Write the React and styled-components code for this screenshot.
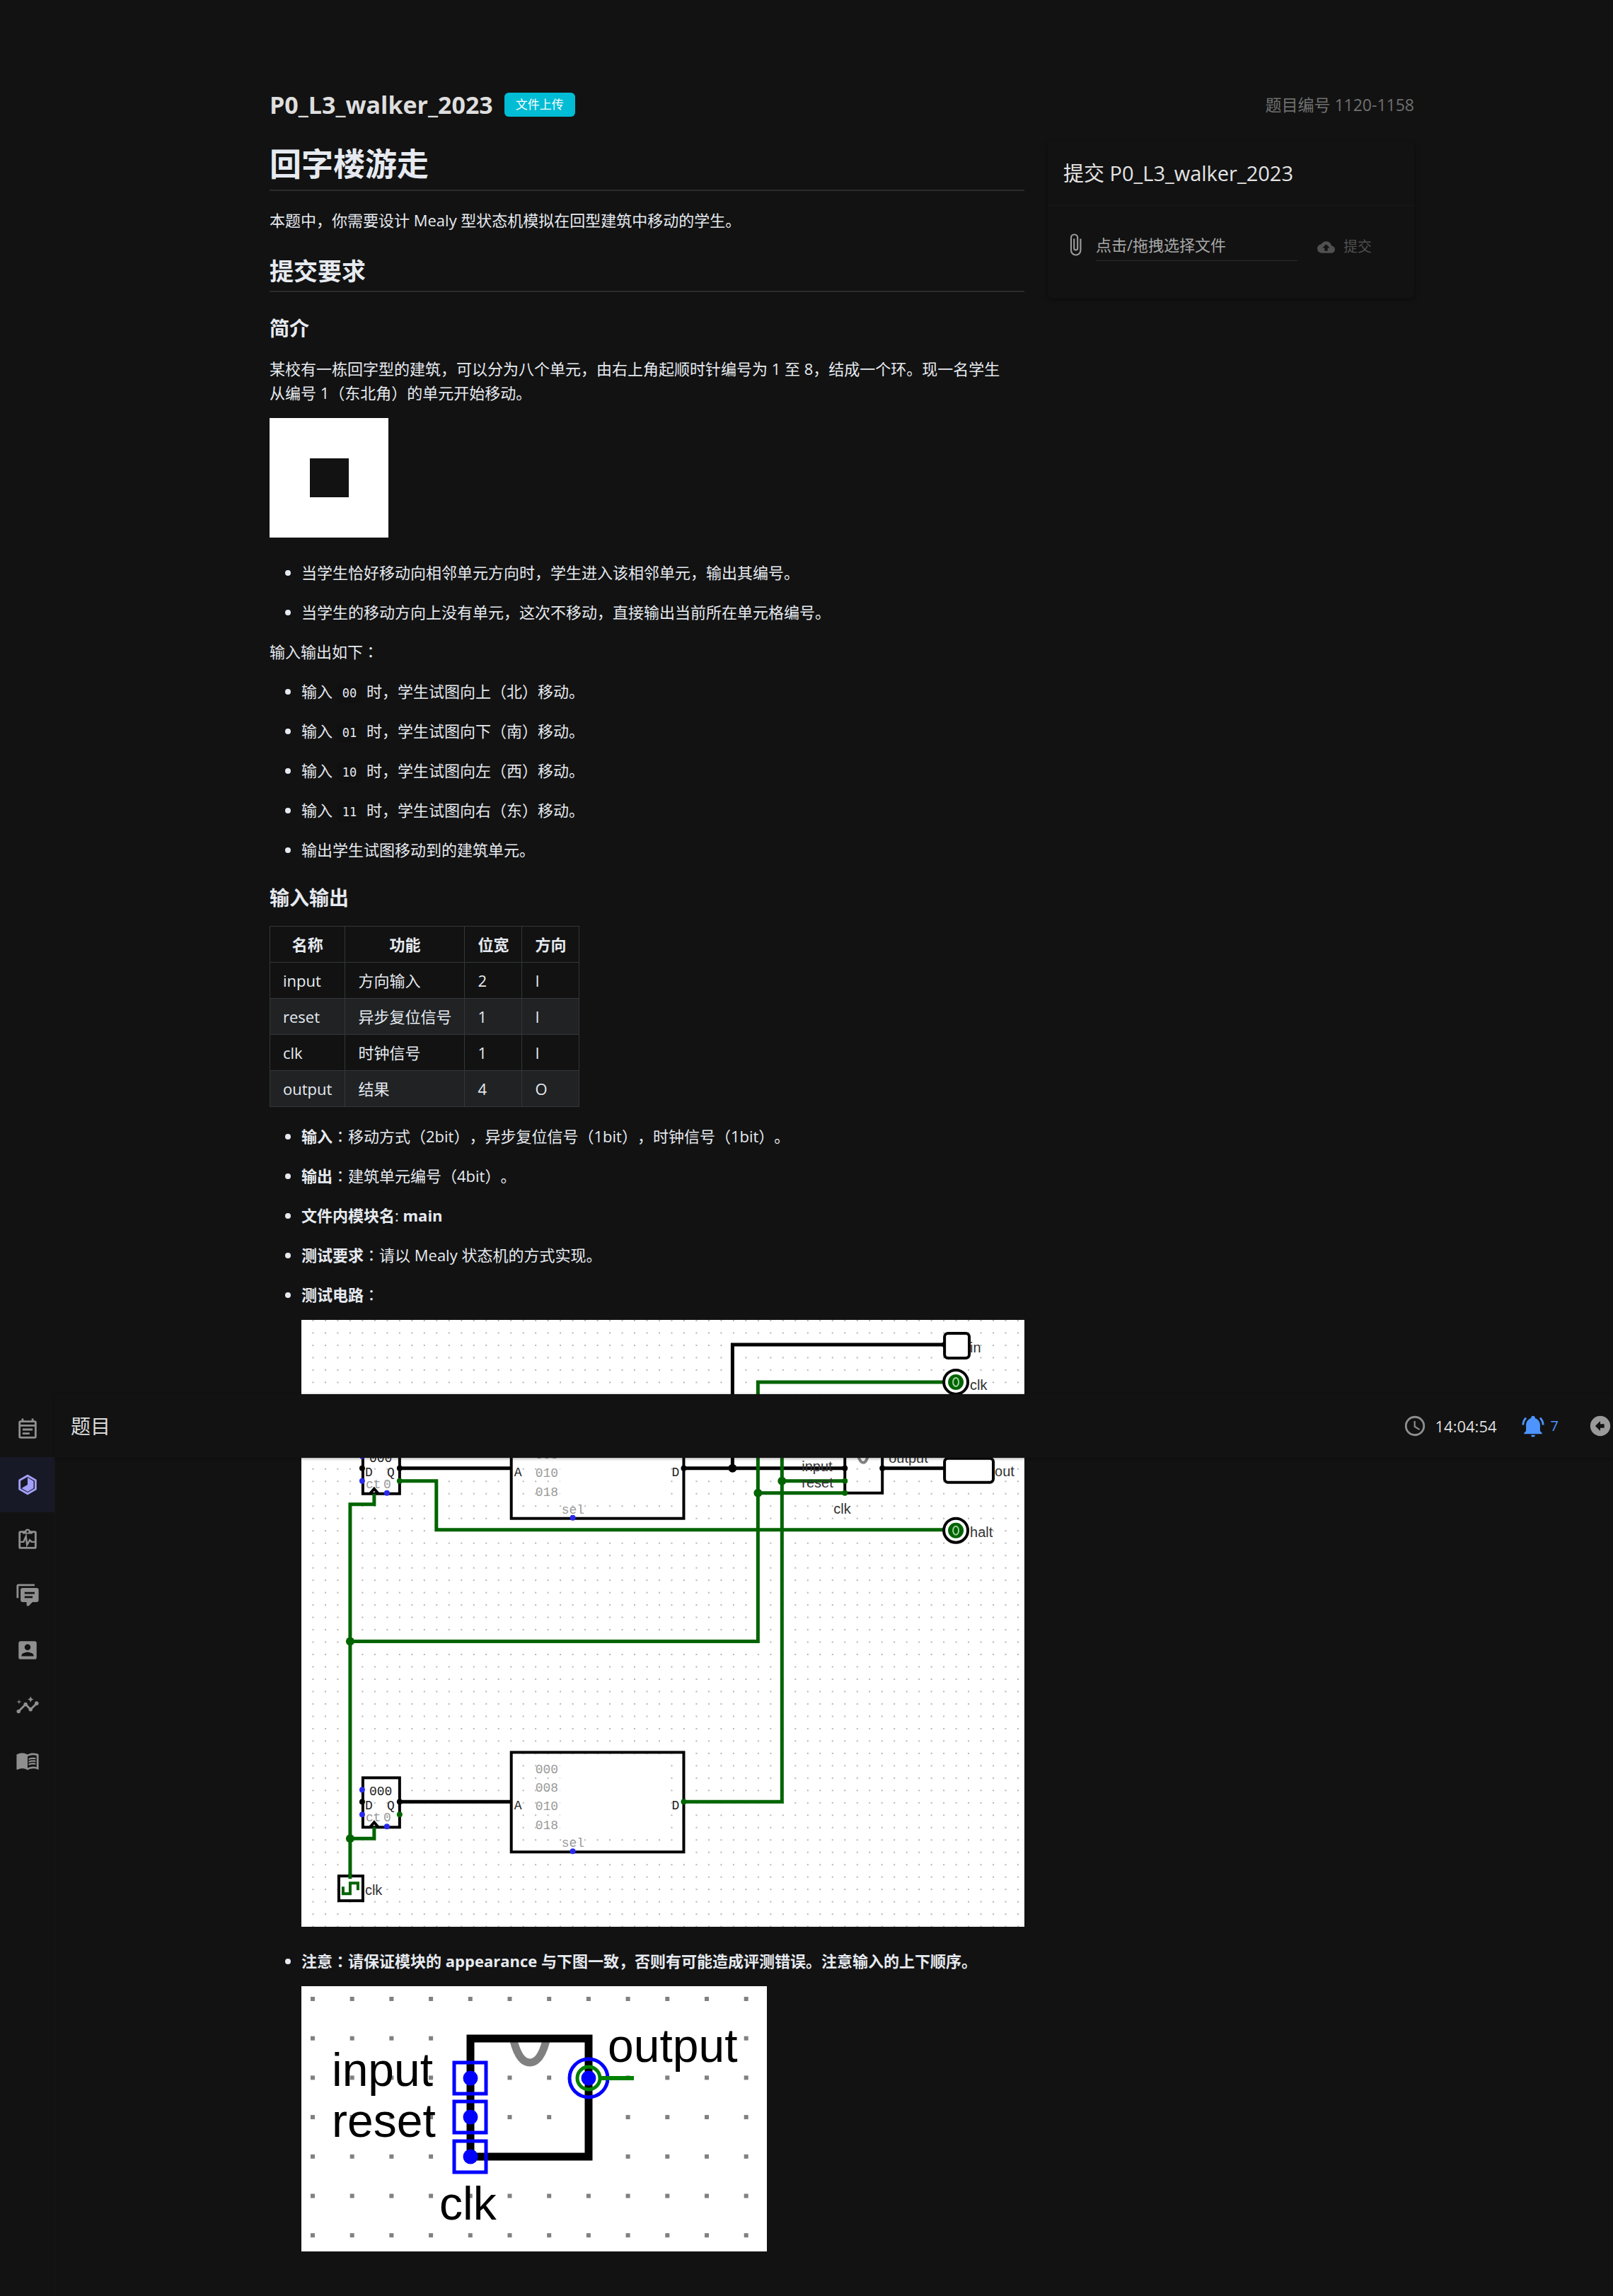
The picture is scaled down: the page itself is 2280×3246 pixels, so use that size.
import React from 'react';
import styled, { createGlobalStyle, css } from 'styled-components';
import { MdInsights, MdMenuBook } from 'react-icons/md';

const GlobalStyle = createGlobalStyle`
  * { box-sizing: border-box; }
  body {
    margin: 0;
    background: #121212;
    color: #e6eaf0;
    font-family: "Open Sans", "Noto Sans CJK SC", sans-serif;
    font-size: 22px;
    line-height: 34px;
    text-spacing-trim: space-all;
  }
`;

const Page = styled.div`
  position: relative;
`;

const Content = styled.main`
  max-width: 1640px;
  margin: 0 auto;
  margin-left: max(78px, calc((100% - 1562px) / 2));
  padding: 120px 0 62px 22px;
`;

const TitleRow = styled.header`
  display: flex;
  align-items: center;
  min-height: 56px;
  margin-bottom: 24px;
`;

const PageTitle = styled.h1`
  margin: 0;
  color: #dedede;
  font-size: 34px;
  line-height: 56px;
  font-weight: 700;
`;

const Badge = styled.span`
  margin-left: 16px;
  padding: 0 16px;
  border-radius: 6px;
  background: #00bcd4;
  color: #fff;
  font-size: 17px;
  line-height: 34px;
`;

const ProblemId = styled.span`
  margin-left: auto;
  color: #707070;
  font-size: 23px;
`;

const Columns = styled.div`
  display: grid;
  grid-template-columns: minmax(0, 1067fr) minmax(0, 518fr);
  column-gap: 33px;
  align-items: start;
`;

const Article = styled.article`
  display: flex;
  flex-direction: column;
  align-items: stretch;
`;

const H1 = styled.h2`
  margin: 0 0 24px;
  padding-bottom: 4px;
  border-bottom: 2px solid #2c2c2c;
  font-size: 45px;
  line-height: 64px;
`;

const H2 = styled.h3`
  margin: 34px 0 0;
  padding-bottom: 7px;
  border-bottom: 2px solid #2c2c2c;
  font-size: 34px;
  line-height: 42px;
`;

const H3 = styled.h4`
  margin: 33px 0 22px;
  font-size: 28px;
  line-height: 36px;
`;

const Paragraph = styled.p`
  margin: ${(p) => (p.$spaced ? '22px 0' : '0')};
`;

const List = styled.ul`
  display: flex;
  flex-direction: column;
  gap: 22px;
  margin: 0;
  padding-left: 45px;
`;

const Code = styled.code`
  padding: 4px 8px;
  border-radius: 6px;
  background: #101010;
  font-family: "DejaVu Sans Mono", monospace;
  font-size: 17px;
  line-height: 1;
`;

const Colon = styled.span.attrs({ children: '：' })`
  font-family: "Noto Sans CJK JP", sans-serif;
  line-height: 1;
`;

const Figure = styled.figure`
  margin: 19px 0 32px;
  ${(p) => p.$inList && css`margin-bottom: ${p.$last ? '0' : '9px'};`}
  svg {
    display: block;
    width: 100%;
    max-width: ${(p) => p.$max || 'none'};
    height: auto;
  }
`;

const Table = styled.table`
  align-self: flex-start;
  margin-bottom: 24px;
  border-collapse: collapse;
  th, td {
    padding: 8px 18px;
    border: 1px solid #343638;
    text-align: left;
  }
  th { text-align: center; }
  tbody tr:nth-child(even) { background: #202224; }
`;

const Card = styled.section`
  border-radius: 6px;
  background: #121212;
  box-shadow: 0 2px 6px rgba(0, 0, 0, 0.4);
`;

const CardTitle = styled.h2`
  margin: 0;
  padding: 28px 22px;
  border-bottom: 1px solid #191919;
  color: #e4e4e4;
  font-size: 29px;
  line-height: 34px;
  font-weight: 400;
`;

const UploadRow = styled.form`
  display: flex;
  align-items: stretch;
  gap: 12px;
  padding: 38px 22px 53px;
  color: #9c9c9c;
`;

const FileLabel = styled.label`
  flex: 0 1 285px;
  padding-bottom: 5px;
  border-bottom: 1px solid #2b2b2b;
  cursor: pointer;
  color: #a8a8a8;
`;

const HiddenFile = styled.input`
  position: absolute;
  width: 1px;
  height: 1px;
  opacity: 0;
`;

const SubmitButton = styled.button`
  display: flex;
  align-items: center;
  gap: 12px;
  padding: 0 16px;
  border: 0;
  background: none;
  color: #505050;
  font: inherit;
  font-size: 20px;
`;

const Shell = styled.div`
  position: absolute;
  top: 1971px;
  right: 0;
  bottom: 0;
  left: 0;
  display: flex;
  align-items: flex-start;
  pointer-events: none;
`;

const Rail = styled.nav`
  align-self: stretch;
  flex: none;
  width: 78px;
  padding-top: 11px;
  border-right: 1px solid #161616;
  background: #121212;
  pointer-events: auto;
`;

const RailLink = styled.a`
  display: flex;
  align-items: center;
  justify-content: center;
  height: 78px;
  color: ${(p) => (p.$active ? '#a3a0fb' : '#8f8f8f')};
  background: ${(p) => (p.$active ? '#181926' : 'transparent')};
`;

const TopBar = styled.div`
  flex: 1;
  display: flex;
  align-items: center;
  height: 90px;
  padding: 0 1px 0 22px;
  background: #121212;
  box-shadow: 0 1px 4px rgba(0, 0, 0, 0.4);
  color: #dedede;
  pointer-events: auto;
`;

const BarTitle = styled.span`
  flex: 1;
  font-size: 28px;
`;

const Clock = styled.span`
  display: flex;
  align-items: center;
  gap: 12px;
  svg { color: #8f8f8f; }
`;

const BarButton = styled.button`
  display: flex;
  align-items: center;
  gap: 8px;
  margin-left: ${(p) => (p.$wide ? '42px' : '34px')};
  padding: 0;
  border: 0;
  background: none;
  color: ${(p) => (p.$accent ? '#4d94ff' : '#9a9a9a')};
  font: inherit;
  font-size: 20px;
`;

const Icon = ({ d, size = 34 }) => (
  <svg width={size} height={size} viewBox="0 0 24 24" fill="currentColor" aria-hidden="true">
    <path fillRule="evenodd" d={d} />
  </svg>
);

const paths = {
  calendar: 'M7 11H17V13H7V11M7 15H14V17H7V15M19 3H18V1H16V3H8V1H6V3H5C3.89 3 3 3.9 3 5V19A2 2 0 0 0 5 21H19A2 2 0 0 0 21 19V5A2 2 0 0 0 19 3M19 19H5V9H19V19M19 7H5V5H19V7Z',
  hexagon: 'M21,16.5C21,16.88 20.79,17.21 20.47,17.38L12.57,21.82C12.41,21.94 12.21,22 12,22C11.79,22 11.59,21.94 11.43,21.82L3.53,17.38C3.21,17.21 3,16.88 3,16.5V7.5C3,7.12 3.21,6.79 3.53,6.62L11.43,2.18C11.59,2.06 11.79,2 12,2C12.21,2 12.41,2.06 12.57,2.18L20.47,6.62C20.79,6.79 21,7.12 21,7.5V16.5M12,4.15L5,8.09V15.91L12,19.85L19,15.91V8.09L12,4.15M12,5L18,8.5V15.5L12,19L6,15.5L12,12V5Z',
  comments: 'M12,23A1,1 0 0,1 11,22V19H7A2,2 0 0,1 5,17V7A2,2 0 0,1 7,5H21A2,2 0 0,1 23,7V17A2,2 0 0,1 21,19H16.9L13.2,22.71C13,22.89 12.76,23 12.5,23H12M3,15H1V3A2,2 0 0,1 3,1H19V3H3V15M9,9V11H19V9H9M9,13V15H17V13H9Z',
  account: 'M6,17C6,15 10,13.9 12,13.9C14,13.9 18,15 18,17V18H6M15,9A3,3 0 0,1 12,12A3,3 0 0,1 9,9A3,3 0 0,1 12,6A3,3 0 0,1 15,9M3,5V19A2,2 0 0,0 5,21H19A2,2 0 0,0 21,19V5A2,2 0 0,0 19,3H5C3.89,3 3,3.9 3,5Z',
  clip: 'M16.5,6V17.5A4,4 0 0,1 12.5,21.5A4,4 0 0,1 8.5,17.5V5A2.5,2.5 0 0,1 11,2.5A2.5,2.5 0 0,1 13.5,5V15.5A1,1 0 0,1 12.5,16.5A1,1 0 0,1 11.5,15.5V6H10V15.5A2.5,2.5 0 0,0 12.5,18A2.5,2.5 0 0,0 15,15.5V5A4,4 0 0,0 11,1A4,4 0 0,0 7,5V17.5A5.5,5.5 0 0,0 12.5,23A5.5,5.5 0 0,0 18,17.5V6H16.5Z',
  upload: 'M14,13V17H10V13H7L12,8L17,13M19.35,10.03C18.67,6.59 15.64,4 12,4C9.11,4 6.6,5.64 5.35,8.03C2.34,8.36 0,10.9 0,14A6,6 0 0,0 6,20H19A5,5 0 0,0 24,15C24,12.36 21.95,10.22 19.35,10.03Z',
  clock: 'M12,20A8,8 0 0,0 20,12A8,8 0 0,0 12,4A8,8 0 0,0 4,12A8,8 0 0,0 12,20M12,2A10,10 0 0,1 22,12A10,10 0 0,1 12,22C6.47,22 2,17.5 2,12A10,10 0 0,1 12,2M12.5,7V12.25L17,14.92L16.25,16.15L11,13V7H12.5Z',
  bell: 'M21,19V20H3V19L5,17V11C5,7.9 7.03,5.17 10,4.29C10,4.19 10,4.1 10,4A2,2 0 0,1 12,2A2,2 0 0,1 14,4C14,4.1 14,4.19 14,4.29C16.97,5.17 19,7.9 19,11V17L21,19M14,21A2,2 0 0,1 12,23A2,2 0 0,1 10,21M19.75,3.19L18.33,4.61C20.04,6.3 21,8.6 21,11H23C23,8.07 21.84,5.25 19.75,3.19M1,11H3C3,8.6 3.96,6.3 5.67,4.61L4.25,3.19C2.16,5.25 1,8.07 1,11Z',
  back: 'M22,12A10,10 0 0,1 12,22A10,10 0 0,1 2,12A10,10 0 0,1 12,2A10,10 0 0,1 22,12M7,12L12,17V14H16V10H12V7L7,12Z',
};

const PulseIcon = () => (
  <svg width="34" height="34" viewBox="0 0 24 24" fill="currentColor" aria-hidden="true">
    <path fillRule="evenodd" d="M19,3H14.82C14.4,1.84 13.3,1 12,1C10.7,1 9.6,1.84 9.18,3H5A2,2 0 0,0 3,5V19A2,2 0 0,0 5,21H19A2,2 0 0,0 21,19V5A2,2 0 0,0 19,3M12,2.7A1.1,1.1 0 0,1 12,4.9A1.1,1.1 0 0,1 12,2.7M5,5H7V6H17V5H19V19H5Z" />
    <path d="M5 14H8L10.4 8.5L11.4 17L14.2 12.2L16 14H19" fill="none" stroke="currentColor" strokeWidth="1.7" />
  </svg>
);

const BuildingFigure = () => (
  <svg viewBox="0 0 168 169" role="img" aria-label="回字楼">
    <path fillRule="evenodd" fill="#fff" d="M0 0H168V169H0ZM57 57V112H112V57Z" />
  </svg>
);

const GREEN = '#006400';
const BLUE = '#2a2aee';

const Wires = styled.g`
  fill: none;
  stroke-width: 5;
`;

const Sans = styled.text`
  font-family: "Liberation Sans", sans-serif;
  font-size: ${(p) => p.$size || 20}px;
  fill: ${(p) => (p.$size ? '#000' : '#333')};
`;

const Mono = styled.text`
  font-family: "Liberation Mono", monospace;
  font-size: 18px;
  fill: ${(p) => (p.$dim ? '#9a9a9a' : '#222')};
`;

const RegisterAndRom = ({ y }) => (
  <g transform={`translate(0 ${y})`}>
    <rect x="87" y="36" width="52" height="70" fill="none" stroke="#000" strokeWidth="4" />
    <rect x="297" y="0" width="244" height="141" fill="none" stroke="#000" strokeWidth="4" />
    <rect x="366" y="4" width="150" height="112" fill="#fff" />
    <path d="M139 70H297" stroke="#000" strokeWidth="5" />
    <Mono x="96" y="61">000</Mono>
    <Mono x="90" y="81">D</Mono>
    <Mono x="121" y="81">Q</Mono>
    <Mono x="91" y="98" $dim>ct</Mono>
    <Mono x="116" y="98" $dim>0</Mono>
    <path d="M97 106L103 99L109 106" fill="none" stroke="#000" strokeWidth="4" />
    <Mono x="301" y="81">A</Mono>
    <Mono x="524" y="81">D</Mono>
    <Mono x="331" y="30" $dim>000</Mono>
    <Mono x="331" y="56" $dim>008</Mono>
    <Mono x="331" y="82" $dim>010</Mono>
    <Mono x="331" y="109" $dim>018</Mono>
    <Mono x="368" y="134" $dim>sel</Mono>
    <circle cx="86" cy="53" r="4" fill={BLUE} />
    <circle cx="86" cy="70" r="4" />
    <circle cx="86" cy="88" r="4" fill={BLUE} />
    <circle cx="121" cy="105" r="4" fill={BLUE} />
    <circle cx="384" cy="140" r="4" fill={BLUE} />
    <circle cx="139" cy="70" r="4" />
    <circle cx="139" cy="88" r="4" fill={GREEN} />
  </g>
);

const Probe = ({ cy }) => (
  <g>
    <circle cx="926" cy={cy} r="17" fill="#fff" stroke="#000" strokeWidth="4" />
    <circle cx="926" cy={cy} r="11" fill={GREEN} />
    <ellipse cx="926" cy={cy} rx="4" ry="6" fill="none" stroke="#9fd09f" strokeWidth="2" />
  </g>
);

const CircuitFigure = () => (
  <svg viewBox="0 0 1023 859" role="img" aria-label="测试电路">
    <defs>
      <pattern id="grid" width="17.5" height="17.5" patternUnits="userSpaceOnUse" x="15.5" y="0">
        <rect width="2" height="2" fill="#b4b4b4" />
      </pattern>
    </defs>
    <rect width="1023" height="859" fill="#fff" />
    <rect width="1023" height="859" fill="url(#grid)" />
    <RegisterAndRom y={140} />
    <RegisterAndRom y={612} />
    <rect x="769" y="175" width="53" height="70" fill="none" stroke="#000" strokeWidth="4" />
    <path d="M785 177C787 196 791 202 795 202S802 196 804 177" fill="none" stroke="#808080" strokeWidth="4" />
    <Wires stroke="#000">
      <path d="M910 35H610V210" />
      <path d="M541 210H769M822 210H910" />
    </Wires>
    <Wires stroke={GREEN}>
      <path d="M910 88H646V455H69" />
      <path d="M680 130V682H541" />
      <path d="M680 228H769M646 245H769" />
      <path d="M139 228H191V297H910" />
      <path d="M103 246V261H69V788M69 734H103V718" />
    </Wires>
    <circle cx="610" cy="210" r="6" />
    <circle cx="910" cy="35" r="4" />
    <circle cx="769" cy="210" r="4" />
    <circle cx="822" cy="210" r="4" />
    <circle cx="541" cy="210" r="4" />
    <g fill={GREEN}>
      <circle cx="680" cy="228" r="6" />
      <circle cx="646" cy="245" r="6" />
      <circle cx="69" cy="455" r="6" />
      <circle cx="69" cy="734" r="6" />
      <circle cx="769" cy="228" r="4" />
      <circle cx="769" cy="245" r="4" />
      <circle cx="541" cy="682" r="4" />
    </g>
    <g fill="#fff" stroke="#000" strokeWidth="4">
      <rect x="910" y="19" width="35" height="35" rx="5" />
      <rect x="910" y="196" width="69" height="34" rx="5" />
      <rect x="53" y="787" width="34" height="35" />
    </g>
    <path d="M69 784V791" stroke={GREEN} strokeWidth="5" />
    <path d="M59 802V812H69V797H80V807" fill="none" stroke={GREEN} strokeWidth="4" />
    <Probe cy={88} />
    <Probe cy={298} />
    <Sans x="946" y="46">in</Sans>
    <Sans x="946" y="99">clk</Sans>
    <Sans x="708" y="214">input</Sans>
    <Sans x="708" y="237">reset</Sans>
    <Sans x="753" y="274">clk</Sans>
    <Sans x="831" y="202">output</Sans>
    <Sans x="981" y="221">out</Sans>
    <Sans x="946" y="307">halt</Sans>
    <Sans x="90" y="814">clk</Sans>
  </svg>
);

const gridDots = [];
for (let row = 0; row < 7; row += 1) {
  for (let col = 0; col < 12; col += 1) {
    const underLabel = row === 1 && col > 7 && col < 11;
    if (!underLabel) gridDots.push([16 + col * 55.7, 18 + row * 55.7]);
  }
}

const AppearanceFigure = () => (
  <svg viewBox="0 0 658 375" role="img" aria-label="模块外观">
    <rect width="658" height="375" fill="#fff" />
    {gridDots.map(([x, y]) => (
      <rect key={`${x}-${y}`} x={x - 3} y={y - 3} width="6" height="6" fill="#808080" />
    ))}
    <path d="M300 77C306 100 314 108 323 108S340 100 346 77" fill="none" stroke="#808080" strokeWidth="11" />
    <rect x="239" y="74" width="167" height="167" fill="none" stroke="#000" strokeWidth="11" />
    {[130, 185, 241].map((cy) => (
      <g key={cy}>
        <rect x="216" y={cy - 22} width="45" height="44" fill="none" stroke="#00f" strokeWidth="5" />
        <circle cx="239" cy={cy} r="10.5" fill="#00f" />
      </g>
    ))}
    <circle cx="406" cy="130" r="27" fill="none" stroke="#00f" strokeWidth="5" />
    <circle cx="406" cy="130" r="16" fill="none" stroke="#008000" strokeWidth="5" />
    <circle cx="406" cy="130" r="10.5" fill="#00f" />
    <path d="M423 130H470" stroke="#008000" strokeWidth="6" />
    <Sans x="43" y="141" $size={66}>input</Sans>
    <Sans x="43" y="213" $size={66}>reset</Sans>
    <Sans x="433" y="107" $size={66}>output</Sans>
    <Sans x="195" y="330" $size={66}>clk</Sans>
  </svg>
);

const moves = [
  ['00', '上（北）'],
  ['01', '下（南）'],
  ['10', '左（西）'],
  ['11', '右（东）'],
];

const ports = [
  ['input', '方向输入', '2', 'I'],
  ['reset', '异步复位信号', '1', 'I'],
  ['clk', '时钟信号', '1', 'I'],
  ['output', '结果', '4', 'O'],
];

const navItems = [
  { label: '日程', icon: <Icon d={paths.calendar} /> },
  { label: '题目', icon: <Icon d={paths.hexagon} />, active: true },
  { label: '评测', icon: <PulseIcon /> },
  { label: '讨论', icon: <Icon d={paths.comments} /> },
  { label: '个人', icon: <Icon d={paths.account} /> },
  { label: '统计', icon: <MdInsights size={34} /> },
  { label: '教程', icon: <MdMenuBook size={34} /> },
];

export default function App() {
  return (
    <Page>
      <GlobalStyle />
      <Content>
        <TitleRow>
          <PageTitle>P0_L3_walker_2023</PageTitle>
          <Badge>文件上传</Badge>
          <ProblemId>题目编号 1120-1158</ProblemId>
        </TitleRow>
        <Columns>
          <Article>
            <H1>回字楼游走</H1>
            <Paragraph>本题中，你需要设计 Mealy 型状态机模拟在回型建筑中移动的学生。</Paragraph>
            <H2>提交要求</H2>
            <H3>简介</H3>
            <Paragraph>
              某校有一栋回字型的建筑，可以分为八个单元，由右上角起顺时针编号为 1 至 8，结成一个环。现一名学生
              <br />
              从编号 1（东北角）的单元开始移动。
            </Paragraph>
            <Figure $max="168px"><BuildingFigure /></Figure>
            <List>
              <li>当学生恰好移动向相邻单元方向时，学生进入该相邻单元，输出其编号。</li>
              <li>当学生的移动方向上没有单元，这次不移动，直接输出当前所在单元格编号。</li>
            </List>
            <Paragraph $spaced>输入输出如下<Colon /></Paragraph>
            <List>
              {moves.map(([code, dir]) => (
                <li key={code}>输入 <Code>{code}</Code> 时，学生试图向{dir}移动。</li>
              ))}
              <li>输出学生试图移动到的建筑单元。</li>
            </List>
            <H3>输入输出</H3>
            <Table>
              <thead>
                <tr><th>名称</th><th>功能</th><th>位宽</th><th>方向</th></tr>
              </thead>
              <tbody>
                {ports.map((row) => (
                  <tr key={row[0]}>{row.map((cell, i) => <td key={i}>{cell}</td>)}</tr>
                ))}
              </tbody>
            </Table>
            <List>
              <li><strong>输入</strong><Colon />移动方式（2bit），异步复位信号（1bit），时钟信号（1bit）。</li>
              <li><strong>输出</strong><Colon />建筑单元编号（4bit）。</li>
              <li><strong>文件内模块名</strong>: <strong>main</strong></li>
              <li><strong>测试要求</strong><Colon />请以 Mealy 状态机的方式实现。</li>
              <li>
                <strong>测试电路</strong><Colon />
                <Figure $inList><CircuitFigure /></Figure>
              </li>
              <li>
                <strong>注意<Colon />请保证模块的 appearance 与下图一致，否则有可能造成评测错误。注意输入的上下顺序。</strong>
                <Figure $inList $last $max="658px"><AppearanceFigure /></Figure>
              </li>
            </List>
          </Article>
          <Card>
            <CardTitle>提交 P0_L3_walker_2023</CardTitle>
            <UploadRow>
              <Icon d={paths.clip} />
              <FileLabel htmlFor="upload">点击/拖拽选择文件</FileLabel>
              <HiddenFile id="upload" type="file" />
              <SubmitButton type="submit" disabled>
                <Icon d={paths.upload} size={25} />
                提交
              </SubmitButton>
            </UploadRow>
          </Card>
        </Columns>
      </Content>
      <Shell>
        <Rail>
          {navItems.map(({ label, icon, active }) => (
            <RailLink key={label} href="#" aria-label={label} $active={active}>{icon}</RailLink>
          ))}
        </Rail>
        <TopBar>
          <BarTitle>题目</BarTitle>
          <Clock><Icon d={paths.clock} />14:04:54</Clock>
          <BarButton type="button" aria-label="通知" $accent><Icon d={paths.bell} />7</BarButton>
          <BarButton type="button" aria-label="返回" $wide><Icon d={paths.back} /></BarButton>
        </TopBar>
      </Shell>
    </Page>
  );
}
